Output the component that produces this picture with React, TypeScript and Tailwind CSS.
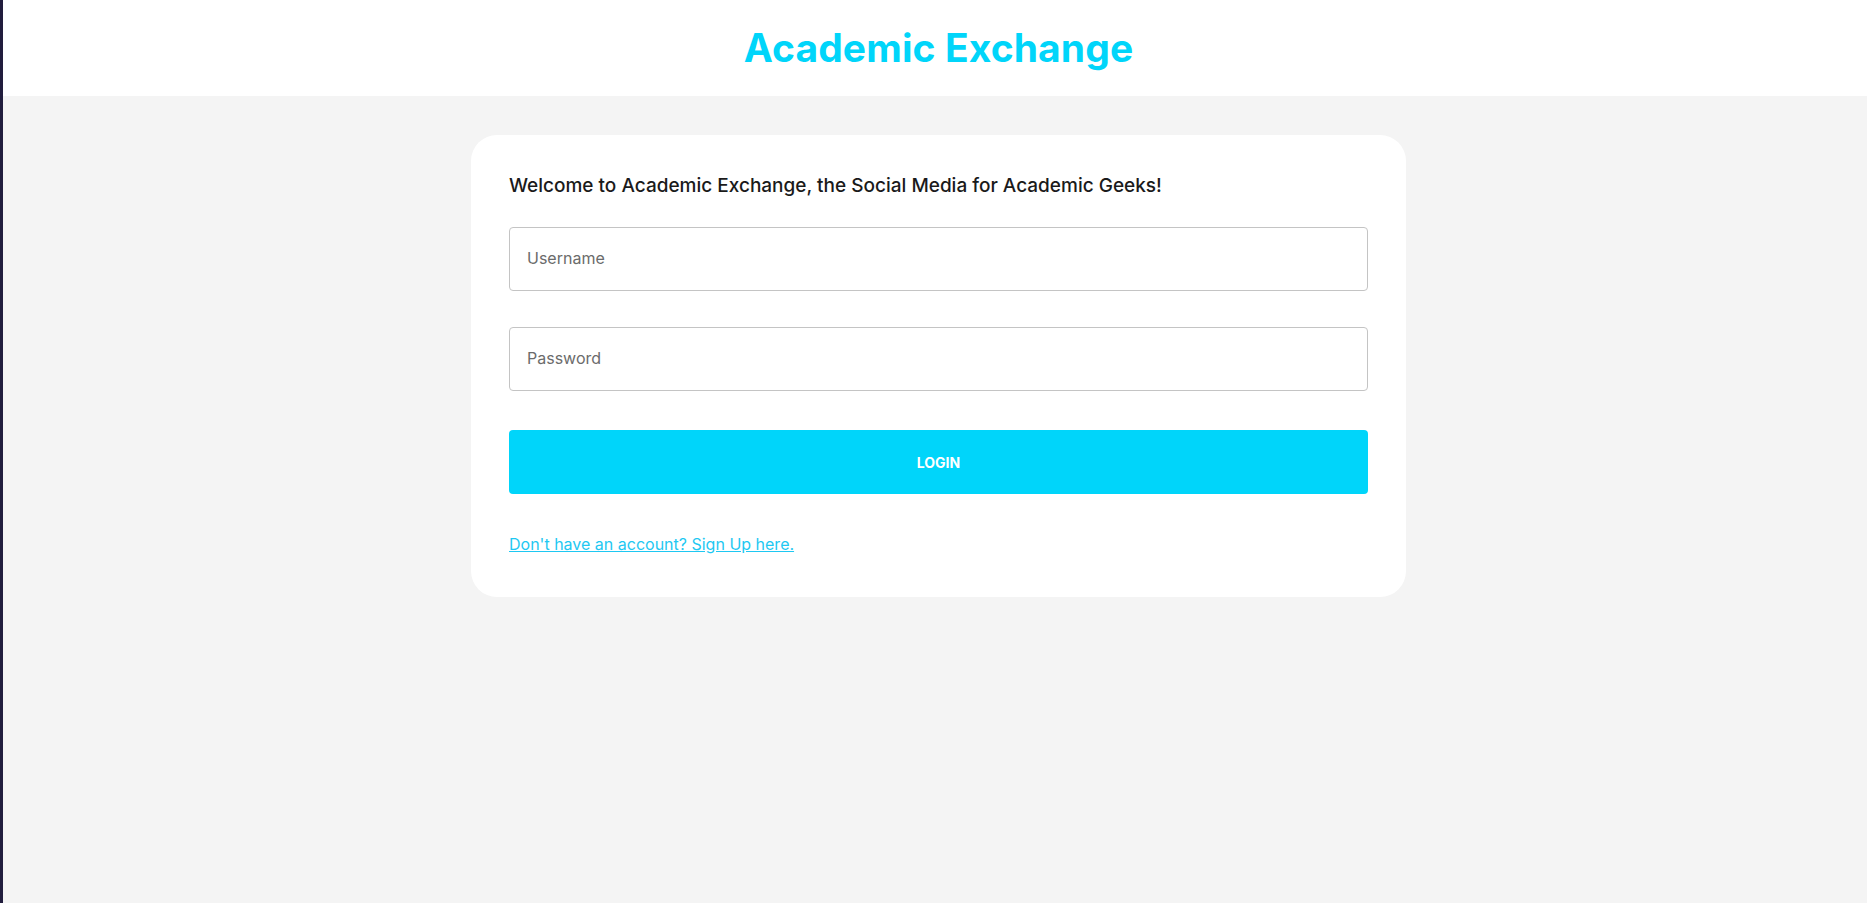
import { useState } from 'react'

export default function App() {
  const [username, setUsername] = useState('')
  const [password, setPassword] = useState('')

  return (
    <div
      className="min-h-screen bg-[#f4f4f4] border-l-[3px] border-[#211d3d]"
      style={{ fontFamily: 'Inter, "Noto Sans", sans-serif' }}
    >
      <header className="h-[96px] bg-white flex items-center justify-center pl-[7px]">
        <h1 className="text-[39px] font-bold text-[#00d5fa] tracking-[0.1px]">Academic Exchange</h1>
      </header>

      <main className="flex justify-center pt-[39px] pl-[7px]">
        <div className="w-[935px] bg-white rounded-[26px] px-[38px] pt-[37px] pb-[41px]">
          <p className="text-[19px] leading-[28px] font-medium text-[#1a1a1a]">
            Welcome to Academic Exchange, the Social Media for Academic Geeks!
          </p>

          <form className="mt-[27px] flex flex-col" onSubmit={e => e.preventDefault()}>
            <input
              type="text"
              placeholder="Username"
              value={username}
              onChange={e => setUsername(e.target.value)}
              className="h-[64px] w-full border border-[#c4c4c4] rounded-[4px] px-[17px] pb-[3px] text-[16px] text-[#222] placeholder:text-[#6b6b6b] outline-none"
            />
            <input
              type="password"
              placeholder="Password"
              value={password}
              onChange={e => setPassword(e.target.value)}
              className="mt-[36px] h-[64px] w-full border border-[#c4c4c4] rounded-[4px] px-[17px] pb-[3px] text-[16px] text-[#222] placeholder:text-[#6b6b6b] outline-none"
            />
            <button
              type="submit"
              className="mt-[39px] h-[64px] w-full rounded-[4px] bg-[#00d5fa] text-white text-[14px] font-bold uppercase"
            >
              Login
            </button>
          </form>

          <a href="#" className="mt-[38px] inline-block text-[16px] leading-[24px] text-[#1ec8f2] underline">
            Don't have an account? Sign Up here.
          </a>
        </div>
      </main>
    </div>
  )
}
